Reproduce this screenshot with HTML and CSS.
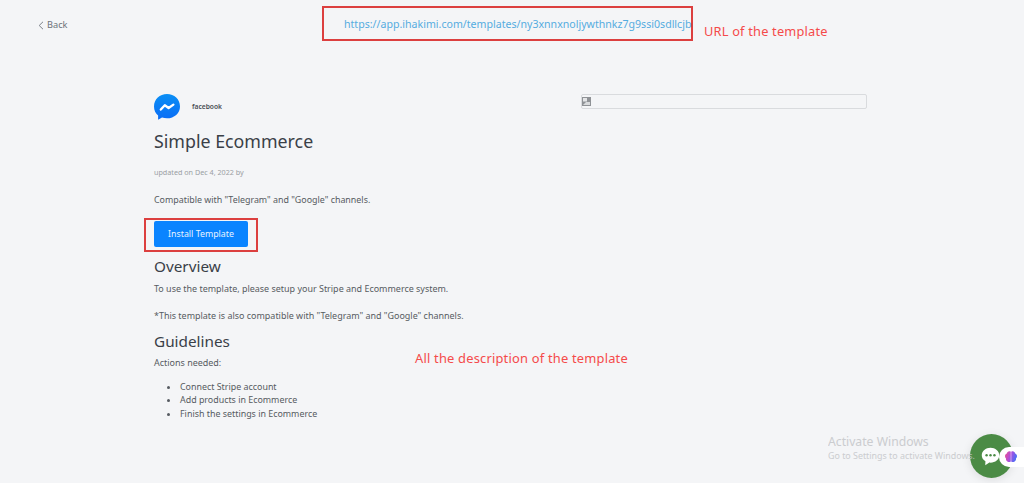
FILE: index.html
```html
<!DOCTYPE html>
<html lang="en">
<head>
<meta charset="utf-8">
<title>Simple Ecommerce template</title>
<link rel="stylesheet" href="styles.css">
</head>
<body>
<header class="topbar">
  <a class="back"><svg class="chev" width="6" height="9" viewBox="0 0 6 9"><path d="M5 .8 1.200 4.500 5 8.200" fill="none" stroke="#7b8088" stroke-width="1"/></svg>Back</a>
  <a class="url">https://app.ihakimi.com/templates/ny3xnnxnoljywthnkz7g9ssi0sdllcjb</a>
  <span class="note note-url">URL of the template</span>
</header>
<main class="content">
  <section class="left">
    <div class="brand">
      <svg class="logo" width="26" height="26" viewBox="0 0 26 26">
        <defs><linearGradient id="mg" x1="0.500" y1="0" x2="0.500" y2="1"><stop offset="0" stop-color="#0a8ff5"/><stop offset="1" stop-color="#0a6cf5"/></linearGradient></defs>
        <path d="M13 0C5.700 0 0 5.300 0 12.400c0 3.800 1.600 7 4.100 9.200v4.200l3.900-2.200c1.600.5 3.200.7 5 .7 7.300 0 13-5.300 13-11.900C26 5.300 20.300 0 13 0Z" fill="url(#mg)"/>
        <path d="M6.800 15.600 10.800 11.200 14.600 14 19.400 10.600" fill="none" stroke="#fff" stroke-width="2.300" stroke-linejoin="round" stroke-linecap="round"/>
      </svg>
      <span class="brand-name">facebook</span>
    </div>
    <h1>Simple Ecommerce</h1>
    <p class="updated">updated on Dec 4, 2022 by</p>
    <p class="compat">Compatible with "Telegram" and "Google" channels.</p>
    <div class="install-box"><button class="install">Install Template</button></div>
    <h2 class="overview">Overview</h2>
    <p class="body-text">To use the template, please setup your Stripe and Ecommerce system.</p>
    <p class="body-text second">*This template is also compatible with "Telegram" and "Google" channels.</p>
    <h2 class="guidelines">Guidelines</h2>
    <p class="body-text">Actions needed:</p>
    <ul>
      <li>Connect Stripe account</li>
      <li>Add products in Ecommerce</li>
      <li>Finish the settings in Ecommerce</li>
    </ul>
  </section>
  <aside class="preview">
    <svg width="9" height="9" viewBox="0 0 9 9"><rect width="9" height="9" fill="#8f9296"/><rect x="1" y="1" width="4" height="3.500" fill="#e4e5e7"/><path d="M1 8 4 5h4v3Z" fill="#d8dadc"/></svg>
  </aside>
</main>
<span class="note note-desc">All the description of the template</span>
<div class="chat">
  <svg width="21" height="21" viewBox="0 0 24 24"><path d="M12 2C6.500 2 2 5.800 2 10.500c0 2.900 1.600 5.300 4.200 6.800L6 22l4.700-3.100c.4.100.9.1 1.300.1 5.500 0 10-3.800 10-8.500S17.500 2 12 2Z" fill="#fff"/><circle cx="7.500" cy="10.500" r="1.400" fill="#4b8b45"/><circle cx="12" cy="10.500" r="1.400" fill="#4b8b45"/><circle cx="16.500" cy="10.500" r="1.400" fill="#4b8b45"/></svg>
</div>
<div class="ai-tab">
  <svg width="12" height="12" viewBox="0 0 12 12">
    <defs><linearGradient id="br" x1="0" y1="0" x2="1" y2="0.300"><stop offset="0" stop-color="#f0508c"/><stop offset=".55" stop-color="#a94fe0"/><stop offset="1" stop-color="#4f6ef5"/></linearGradient></defs>
    <path d="M3.500.5C5 0 5.700.6 6 1c.4-.4 1.100-1 2.500-.5 1.200.4 1.700 1.300 1.700 2 1.100.5 1.800 1.500 1.800 2.700 0 1-.4 1.700-1 2.300.2 1.200-.3 2.500-1.700 3.200-1.200.6-2.400.4-3.300-.5-.9.900-2.100 1.100-3.300.5C1.300 10 .8 8.700 1 7.500.4 6.900 0 6.200 0 5.200 0 4 .7 3 1.800 2.500c0-.7.500-1.600 1.700-2Z" fill="url(#br)"/>
    <path d="M6 1v9.500" stroke="#fff" stroke-width=".5"/>
  </svg>
</div>
<div class="activate">
  <div class="activate-title">Activate Windows</div>
  <div class="activate-sub">Go to Settings to activate Windows.</div>
</div>
</body>
</html>
```

FILE: styles.css
```css
* { box-sizing: border-box; }
html, body { height: 100%; }
body {
  margin: 0;
  background: #f4f5f7;
  font-family: "Noto Sans", "Open Sans", sans-serif;
  color: #3d4349;
  overflow: hidden;
  position: relative;
}
.topbar {
  height: 94px;
  position: relative;
}
.back {
  position: absolute;
  left: 38px;
  top: 18px;
  display: flex;
  align-items: center;
  gap: 3px;
  font-size: 9.200px;
  line-height: 14px;
  color: #6c7278;
}
.url {
  position: absolute;
  left: 322px;
  top: 6px;
  width: 371px;
  height: 35px;
  border: 2px solid #dc3f3f;
  padding-left: 20px;
  font-size: 10.600px;
  line-height: 33px;
  color: #55ace0;
  white-space: nowrap;
}
.note {
  position: absolute;
  color: #f54a4a;
  font-family: "Noto Sans", sans-serif;
  line-height: 18px;
  white-space: nowrap;
  letter-spacing: .2px;
}
.note-url { left: 704px; top: 22px; font-size: 12.800px; }
.note-desc { left: 415px; top: 349px; font-size: 12.900px; }
.content {
  display: flex;
  padding-left: 154px;
}
.left { width: 427px; }
.brand {
  display: flex;
  align-items: center;
  gap: 12px;
  height: 26px;
}
.logo { flex: none; }
.brand-name {
  font-size: 6.700px;
  line-height: 10px;
  font-weight: 600;
  color: #4a4f55;
  margin-bottom: 1px;
}
h1 {
  margin: 8px 0 0;
  font-size: 17.800px;
  line-height: 26px;
  font-weight: 400;
  color: #3a4047;
}
.updated {
  margin: 13px 0 0;
  font-size: 7.200px;
  line-height: 11px;
  color: #9a9ea3;
}
.compat {
  margin: 15px 0 0;
  font-size: 8.900px;
  line-height: 14px;
  color: #565b61;
}
.install-box {
  margin: 11px 0 0 -10px;
  width: 114px;
  height: 34px;
  border: 2px solid #dc3f3f;
  padding: 1px 8px;
}
.install {
  display: block;
  width: 94px;
  height: 26px;
  border: 0;
  border-radius: 2px;
  background: #0a84ff;
  color: #e8f3ff;
  font-family: inherit;
  font-size: 8.800px;
  padding: 0;
}
h2 {
  margin: 0;
  font-size: 15.300px;
  line-height: 22px;
  font-weight: 400;
  color: #3a4047;
}
.overview { margin-top: 3px; }
.guidelines { margin-top: 7px; }
.body-text {
  margin: 5px 0 0;
  font-size: 8.960px;
  line-height: 14px;
  color: #565b61;
}
.second { margin-top: 13px; }
.guidelines + .body-text { margin-top: 4px; }
ul {
  margin: 10px 0 0;
  padding-left: 26px;
  font-size: 8.900px;
  line-height: 13.400px;
  color: #565b61;
}
.preview {
  width: 286px;
  height: 15px;
  border: 1px solid #d9dbde;
  border-radius: 2px;
  display: flex;
  align-items: center;
}
.activate {
  position: absolute;
  left: 828px;
  top: 434px;
  color: #c4c6c9;
  white-space: nowrap;
  opacity: .85;
}
.activate-title { font-size: 12.200px; line-height: 15px; }
.activate-sub { font-size: 8.900px; line-height: 13px; }
.chat {
  position: absolute;
  left: 970px;
  top: 434px;
  width: 43px;
  height: 44px;
  border-radius: 50%;
  background: #4b8b45;
  box-shadow: 0 2px 10px rgba(0, 0, 0, .1);
  display: flex;
  align-items: center;
  justify-content: center;
  padding-right: 3px;
}
.ai-tab {
  position: absolute;
  left: 999px;
  top: 447px;
  width: 25px;
  height: 20px;
  background: #fff;
  border-radius: 10px 0 0 10px;
  display: flex;
  align-items: center;
  padding-left: 6px;
}
```
